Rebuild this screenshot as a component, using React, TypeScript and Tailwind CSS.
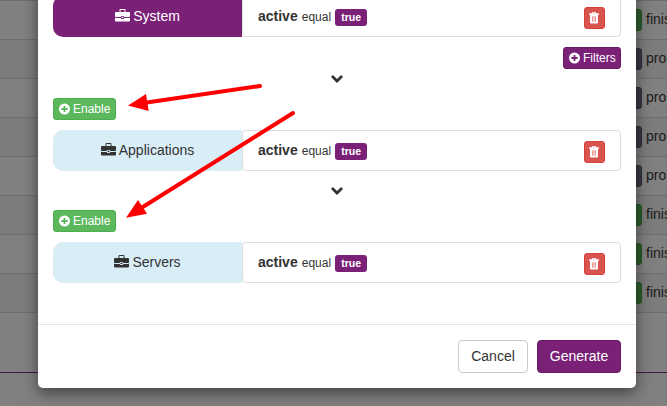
const GREEN = 'border-[#265626] bg-[#2e5c2e]';
const SLATE = 'border-[#312f3b] bg-[#393744]';

const jobs = [
  { status: 'finis', color: GREEN },
  { status: 'pro', color: SLATE },
  { status: 'pro', color: SLATE },
  { status: 'pro', color: SLATE },
  { status: 'pro', color: SLATE },
  { status: 'finis', color: GREEN },
  { status: 'finis', color: GREEN },
  { status: 'finis', color: GREEN },
];

function Briefcase() {
  return (
    <svg width="15" height="13" viewBox="0 0 15 13" fill="currentColor" className="shrink-0">
      <path
        fillRule="evenodd"
        d="M5.500 0h4a1 1 0 0 1 1 1v2H14a1 1 0 0 1 1 1v3.500l-1 .5H9.100v-1H5.900v1H1L0 7.500V4a1 1 0 0 1 1-1h3.500V1a1 1 0 0 1 1-1ZM5.500 1v2h4V1Z"
      />
      <path d="M0 8.500 1 9h4.900v1h3.200V9H14l1-.5v3a1 1 0 0 1-1 1H1a1 1 0 0 1-1-1Z" />
      <path d="M6.500 7.700h2v1.400h-2Z" />
    </svg>
  );
}

function PlusSign() {
  return (
    <svg width="12" height="12" viewBox="0 0 12 12" fill="currentColor" className="shrink-0">
      <path
        fillRule="evenodd"
        d="M5.500 .500a5.500 5.500 0 1 1 0 11a5.500 5.500 0 0 1 0-11ZM4.600 2.900V5.100H2.400v1.800h2.200v2.200h1.800V6.900h2.200V5.100H6.400V2.900Z"
      />
    </svg>
  );
}

function Trash() {
  return (
    <svg width="10" height="12" viewBox="0 0 10 12" fill="currentColor">
      <path
        fillRule="evenodd"
        d="M3.500 0h3c.4 0 .7.3.7.7V1.200h2.200c.3 0 .5.2.5.5V3H.1V1.700c0-.3.2-.5.5-.5h2.200V.7c0-.4.300-.7.700-.7ZM3.800.7V1.200h2.400V.7ZM1 3h8v7.500a1 1 0 0 1-1 1H2a1 1 0 0 1-1-1ZM3 4.300v5.500h.6V4.300ZM4.700 4.300v5.500h.6V4.300ZM6.400 4.300v5.500h.6V4.300Z"
      />
    </svg>
  );
}

function Chevron() {
  return (
    <svg width="12" height="8" viewBox="0 0 12 8" fill="#333">
      <path d="M0 2 1.900.100 6 4.100 10.100.100 12 2 6 8Z" />
    </svg>
  );
}

function FilterRow({ name, primary = false }: { name: string; primary?: boolean }) {
  return (
    <div className="flex h-[41px]">
      <div
        className={`flex w-[189px] items-center justify-center gap-[3px] rounded-l-[10px] pb-[2px] ${
          primary ? 'bg-[#7a2077] text-white' : 'bg-[#d9edf7] text-[#333]'
        }`}
      >
        <Briefcase />
        <span className="leading-5">{name}</span>
      </div>
      <div className="flex flex-1 items-start rounded border border-[#ddd] pt-[9px] pr-[15px] pl-[15px]">
        <span className="leading-5 font-bold">active</span>
        <span className="mt-px ml-1 text-[12px] leading-5">equal</span>
        <span className="mt-[3px] ml-1 flex h-[17px] w-8 items-center justify-center rounded-[3px] bg-[#7a2077] text-[10.5px] leading-none font-bold text-white">
          true
        </span>
        <button className="mt-px ml-auto flex h-[22px] w-[21px] items-center justify-start rounded-[3px] border border-[#d43f3a] bg-[#d9534f] pl-1 text-white">
          <Trash />
        </button>
      </div>
    </div>
  );
}

function EnableButton() {
  return (
    <button className="flex h-[22px] w-[63px] items-center gap-[2px] rounded-[3px] border border-[#4cae4c] bg-[#5cb85c] pl-[5px] text-[12px] leading-[18px] text-white">
      <PlusSign />
      Enable
    </button>
  );
}

function Arrows() {
  return (
    <svg className="pointer-events-none absolute inset-0" width="667" height="406" viewBox="0 0 667 406">
      <g stroke="#f00" strokeWidth="4" strokeLinecap="round">
        <path d="M260 86 145 102.700" />
        <path d="M293 113 142 207.500" />
      </g>
      <g fill="#f00">
        <path d="M128 105.500 146 94 148.700 111Z" />
        <path d="M126 217.700 138 200 147 213.700Z" />
      </g>
    </svg>
  );
}

export default function App() {
  return (
    <div className="relative h-[406px] w-[667px] overflow-hidden bg-[#808080] font-['Liberation_Sans',Arial,sans-serif] text-[14px] text-[#333]">
      <div className="flex h-[373px] flex-col border-b border-[#4a134a]">
        {jobs.map((job, i) => (
          <div
            key={i}
            className={`flex h-[39px] shrink-0 items-start border-t border-[#6e6e6e] pt-2 pl-[620px] text-[#1a1a1a] ${
              i % 2 ? 'bg-[#7c7c7c]' : 'bg-[#808080]'
            }`}
          >
            <span className={`h-[22px] w-[22px] shrink-0 rounded-[3px] border ${job.color}`} />
            <span className="ml-1 leading-5">{job.status}</span>
          </div>
        ))}
        <div className="border-t border-[#6e6e6e]" />
      </div>

      <div className="absolute top-[-20px] left-[38px] flex h-[408px] w-[598px] flex-col rounded-[5px] bg-white shadow-[0_5px_15px_rgba(0,0,0,0.5)]">
        <div className="flex h-[344px] flex-col px-[15px] pt-4">
          <FilterRow name="System" primary />
          <button className="mt-[10px] flex h-[22px] w-[58px] items-center gap-[2px] self-end rounded-[3px] border border-[#671b64] bg-[#7a2077] pl-[5px] text-[12px] leading-[18px] text-white">
            <PlusSign />
            Filters
          </button>
          <div className="flex h-[29px] justify-center pt-[6px]">
            <Chevron />
          </div>
          <EnableButton />
          <div className="h-[10px]" />
          <FilterRow name="Applications" />
          <div className="flex h-[39px] justify-center pt-4">
            <Chevron />
          </div>
          <EnableButton />
          <div className="h-[10px]" />
          <FilterRow name="Servers" />
        </div>
        <div className="flex flex-1 items-start justify-end gap-[9px] border-t border-[#e5e5e5] px-[15px] pt-[15px]">
          <button className="h-[33px] w-[70px] rounded border border-[#ccc] bg-white pb-[2px] leading-5">Cancel</button>
          <button className="h-[33px] w-[84px] rounded border border-[#671b64] bg-[#7a2077] pb-[2px] leading-5 text-white">
            Generate
          </button>
        </div>
      </div>
      <Arrows />
    </div>
  );
}
